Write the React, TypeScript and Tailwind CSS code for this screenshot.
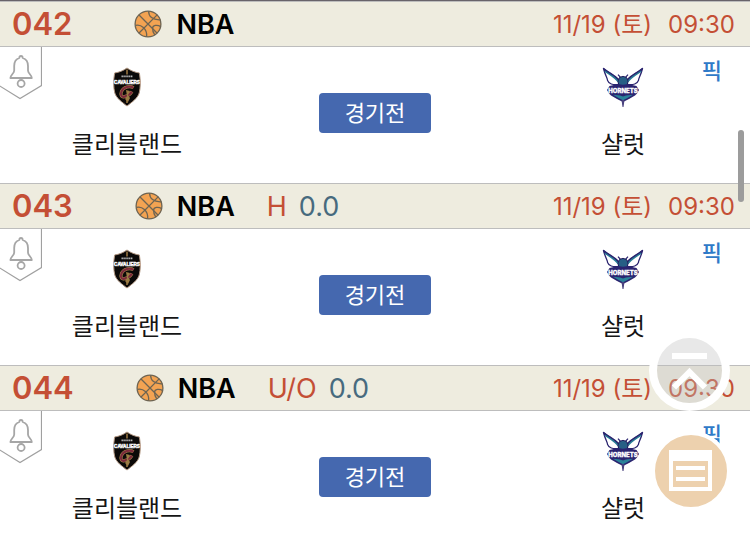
import React from "react";

type Market = { label: string; value: string };
type Game = { id: string; market?: Market };

const games: Game[] = [
  { id: "042" },
  { id: "043", market: { label: "H", value: "0.0" } },
  { id: "044", market: { label: "U/O", value: "0.0" } },
];

function Basketball() {
  return (
    <svg viewBox="0 0 28 28" className="h-7 w-7 shrink-0" aria-hidden="true">
      <circle cx="14" cy="14" r="13" fill="#f3a352" />
      <g fill="none" stroke="#6d6453" strokeWidth="1.3">
        <circle cx="14" cy="14" r="12.9" />
        <path d="M4.8 4.8 23.2 23.2M23.4 4.6 4.8 23.2" />
        <path d="M14.6 1.2C14.6 6.2 18.4 10.2 26.4 9.8" />
        <path d="M1.4 15.4C7 14 13.4 18.6 12.6 26.6" />
        <path d="M26.8 16.6C23 14.4 18.8 15.2 18.6 18 18.4 20.4 19.4 22.8 20.8 25" />
      </g>
    </svg>
  );
}

function CavaliersLogo() {
  return (
    <svg viewBox="0 0 28 40" className="h-10 w-7" role="img" aria-label="Cleveland Cavaliers">
      <path d="M14 1C10.5 3.6 6 5.4 1.6 6 .4 13 .4 21 1.8 26 3.4 31.4 9.4 35.4 14 39 18.6 35.4 24.6 31.4 26.2 26 27.6 21 27.6 13 26.4 6 22 5.4 17.5 3.6 14 1Z" fill="#0b0908" stroke="#b29782" strokeWidth="1" />
      <path d="M14 2.5v5M14 29v7" stroke="#a98247" strokeWidth="1.4" />
      <path d="M8.5 9.4H19.5" stroke="#b9b9b9" strokeWidth="1.6" strokeDasharray="1.4 .5" />
      <text x="14" y="17" textAnchor="middle" fontSize="4.6" fontWeight="800" fill="#fff" stroke="#fff" strokeWidth=".4" fontFamily="'Liberation Sans', sans-serif">
        CAVALIERS
      </text>
      <path d="M20.5 20.8C17 18.4 10.5 19.8 8.5 24.4 7 28.3 8.7 30.4 11.5 29.6 14.7 28.9 17.4 27 19 24.6" fill="none" stroke="#a6864a" strokeWidth="3.2" />
      <path d="M20.5 20.8C17 18.4 10.5 19.8 8.5 24.4 7 28.3 8.7 30.4 11.5 29.6 14.7 28.9 17.4 27 19 24.6" fill="none" stroke="#7c2a3b" strokeWidth="2.2" />
      <path d="m13 23 4 1-2 4 2 3-2 4-3-3 2-3Z" fill="#9b7b43" />
    </svg>
  );
}

function HornetsLogo() {
  return (
    <svg viewBox="0 0 42 40" className="h-10 w-11" role="img" aria-label="Charlotte Hornets">
      <g fill="#fff" stroke="#2b246f" strokeWidth="1.3" strokeLinejoin="round">
        <path d="M1.5 1.5C6 6 14 9 17.5 15L16 17.5C11 18.4 6.5 16.6 5.5 13.4 6 12 3 8 1.5 1.5Z" />
        <path d="M40.5 1.5C36 6 28 9 24.5 15L26 17.5C31 18.4 35.5 16.6 36.5 13.4 36 12 39 8 40.5 1.5Z" />
      </g>
      <path d="M3 4C8 7.5 13 10 16.5 15M39 4C34 7.5 29 10 25.5 15" stroke="#287c95" strokeWidth="1.8" fill="none" />
      <path d="M2 1.8C7 6 13 8 17 13M40 1.8C35 6 29 8 25 13" stroke="#2b246f" strokeWidth="1.3" fill="none" />
      <path d="M16 7.6 19 11M26 7.6 23 11" stroke="#2b246f" strokeWidth="1.2" />
      <path d="M17.5 10.5 21 9.3 24.5 10.5 26 14 25 19H17L16 14Z" fill="#275f85" stroke="#25205f" />
      <path d="M7.5 19 16 17 21 17.8 26 17 34.5 19 37 23 35 26.5 33 28.6 27 32 21 35 15 32 9 28.6 7 26.5 5 23Z" fill="#2b2470" />
      <path d="m11 27.8 7 .8 3 .8 3-.8 7-.8-6 3.4-4 2-4-2Z" fill="#2a8299" />
      <path d="M19.5 33h3l-1 7h-1Z" fill="#4a437f" />
      <text x="21" y="26" textAnchor="middle" fontSize="6" fontWeight="800" fill="#fff" stroke="#fff" strokeWidth=".3" fontFamily="Inter, sans-serif">HORNETS</text>
    </svg>
  );
}

function AlertButton() {
  return (
    <button type="button" aria-label="알림" className="absolute top-0 left-0">
      <svg viewBox="0 0 42 53" className="h-[53px] w-[42px]" fill="none" aria-hidden="true">
        <path d="M41.5 0V38.5L20 51.5-1 38.5" stroke="#a0a0a0" strokeWidth="1.2" />
        <g stroke="#a6a6a6" strokeWidth="1.8" strokeLinejoin="round">
          <path d="M21 9C19.8 9 19.3 9.8 19.3 11 15.8 12 14.2 15 14.2 19V23.5C14.2 26.5 10.4 28 10.4 31H31.8C31.8 28 28 26.5 28 23.5V19C28 15 26.3 12 22.7 11 22.7 9.8 22.2 9 21 9Z" />
          <circle cx="21.1" cy="36.5" r="3.5" />
        </g>
      </svg>
    </button>
  );
}

function Team({ name, children }: { name: string; children: React.ReactNode }) {
  return (
    <div className="flex flex-col items-center gap-5">
      {children}
      <span className="text-2xl leading-9 text-[#151515]">{name}</span>
    </div>
  );
}

function GameRow({ game }: { game: Game }) {
  return (
    <li>
      <header className="flex h-[46px] items-center justify-between border-y border-[#bdbdbd] bg-[#eeecdf] pr-[15px] pl-3">
        <div className="flex items-center">
          <strong className="text-[31px] font-semibold text-[#c44f35]">{game.id}</strong>
          <span className="ml-[62px] flex items-center gap-3.5">
            <Basketball />
            <strong className="pt-0.5 text-[27px] font-semibold text-black">NBA</strong>
          </span>
          {game.market && (
            <span className="ml-8 flex gap-3 pt-0.5 text-[27px]">
              <span className="text-[#c44f35]">{game.market.label}</span>
              <span className="text-[#476a7e]">{game.market.value}</span>
            </span>
          )}
        </div>
        <time className="flex gap-4 pt-0.5 text-2xl text-[#c44f35]">
          <span>11/19 (토)</span>
          <span>09:30</span>
        </time>
      </header>
      <div className="relative grid h-[136px] grid-cols-3 px-[3px] pt-5">
        <AlertButton />
        <Team name="클리블랜드">
          <CavaliersLogo />
        </Team>
        <div className="flex justify-center pt-[26px]">
          <button type="button" className="h-10 w-28 rounded-sm bg-[#4568af] text-[22px] text-white">
            경기전
          </button>
        </div>
        <Team name="샬럿">
          <HornetsLogo />
        </Team>
        <a href="#pick" className="absolute top-2 right-7 text-[22px] leading-8 font-medium text-[#2f7ac8]">
          픽
        </a>
      </div>
    </li>
  );
}

export default function App() {
  return (
    <main className="relative h-screen overflow-hidden bg-white font-['Inter','Noto_Sans_CJK_KR',sans-serif]">
      <ul className="border-t border-[#68636a]">
        {games.map((game) => (
          <GameRow key={game.id} game={game} />
        ))}
      </ul>

      <div className="absolute top-[130px] right-1.5 h-[72px] w-1.5 rounded-full bg-[#9c9c9c]" />

      <div className="absolute right-[19px] bottom-[25px] flex flex-col items-center">
        <button type="button" aria-label="맨 위로" className="h-[81px] w-[81px] rounded-full border-8 border-white bg-[#bcbcbc]/35">
          <svg viewBox="0 0 65 65" className="h-full w-full" fill="none" stroke="#fff" strokeWidth="6" aria-hidden="true">
            <path d="M15 18H50M17 49.5 32.5 34 48 49.5" />
          </svg>
        </button>
        <button type="button" aria-label="목록" className="mt-5 ml-1 h-20 w-20 rounded-full border-4 border-white bg-[#edd1ae]">
          <svg viewBox="0 0 72 72" className="h-full w-full" fill="none" aria-hidden="true">
            <path fill="#fff" fillRule="evenodd" d="M14 15h43v41H14ZM18 26v26h35V26Z" />
            <path stroke="#fff" strokeWidth="4" d="M21 33H50M21 44H50" />
          </svg>
        </button>
      </div>
    </main>
  );
}
